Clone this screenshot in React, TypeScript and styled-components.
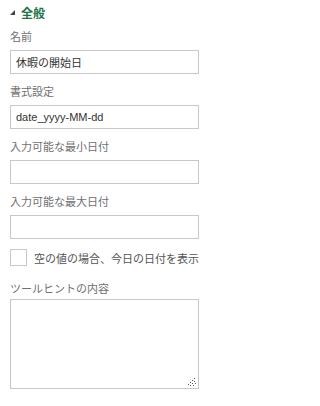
import styled, { createGlobalStyle } from 'styled-components'

const GlobalStyle = createGlobalStyle`
  html, body {
    margin: 0;
    padding: 0;
    background: #ffffff;
  }
  body {
    font-family: "Liberation Sans", "Noto Sans CJK JP", sans-serif;
  }
`

const Panel = styled.div`
  width: 207px;
  padding: 4px 8px 0 10px;
  box-sizing: border-box;
`

const SectionHeader = styled.div`
  display: flex;
  align-items: center;
  gap: 6px;
  height: 16px;
  margin-bottom: 9px;
  color: #217346;
  font-size: 12px;
  font-weight: bold;
`

const Caret = styled.svg`
  width: 5px;
  height: 5px;
  margin-top: 1px;
`

const Field = styled.div`
  display: flex;
  flex-direction: column;
  margin-bottom: 10px;
`

const Label = styled.label<{ $tight?: boolean }>`
  height: 16px;
  line-height: 16px;
  margin-bottom: ${p => (p.$tight ? 2 : 5)}px;
  color: #707070;
  font-size: 11px;
`

const TextBox = styled.input`
  height: 24px;
  width: 189px;
  box-sizing: border-box;
  margin: 0;
  padding: 0 5px;
  border: 1px solid #c8c8c8;
  border-radius: 0;
  outline: none;
  color: #333333;
  font-family: "Liberation Sans", "Noto Sans CJK JP", sans-serif;
  font-size: 11px;
`

const CheckRow = styled.label`
  display: flex;
  align-items: center;
  gap: 7px;
  margin: 7px 0 15px;
  color: #555555;
  font-size: 11px;
`

const Box = styled.span`
  width: 17px;
  height: 17px;
  box-sizing: border-box;
  border: 1px solid #c8c8c8;
  background: #ffffff;
`

const AreaWrap = styled.div`
  position: relative;
  width: 189px;
  height: 90px;
`

const TextArea = styled.textarea`
  display: block;
  width: 100%;
  height: 100%;
  box-sizing: border-box;
  margin: 0;
  padding: 4px 5px;
  border: 1px solid #c8c8c8;
  border-radius: 0;
  outline: none;
  resize: none;
  font-family: "Liberation Sans", "Noto Sans CJK JP", sans-serif;
  font-size: 11px;
`

const Grip = styled.svg`
  position: absolute;
  right: 3px;
  bottom: 3px;
  width: 9px;
  height: 9px;
  pointer-events: none;
`

const App = () => (
  <>
    <GlobalStyle />
    <Panel>
      <SectionHeader>
        <Caret viewBox="0 0 5 5">
          <polygon points="5,0 5,5 0,5" fill="#444" />
        </Caret>
        全般
      </SectionHeader>

      <Field>
        <Label>名前</Label>
        <TextBox defaultValue="休暇の開始日" />
      </Field>

      <Field>
        <Label>書式設定</Label>
        <TextBox defaultValue="date_yyyy-MM-dd" />
      </Field>

      <Field>
        <Label>入力可能な最小日付</Label>
        <TextBox />
      </Field>

      <Field>
        <Label>入力可能な最大日付</Label>
        <TextBox />
      </Field>

      <CheckRow>
        <Box />
        空の値の場合、今日の日付を表示
      </CheckRow>

      <Field>
        <Label $tight>ツールヒントの内容</Label>
        <AreaWrap>
          <TextArea />
          <Grip viewBox="0 0 9 9">
            <g fill="#555">
              <rect x="7" y="1" width="1" height="1" />
              <rect x="5" y="3" width="1" height="1" />
              <rect x="3" y="5" width="1" height="1" />
              <rect x="1" y="7" width="1" height="1" />
              <rect x="7" y="4" width="1" height="1" />
              <rect x="5" y="6" width="1" height="1" />
              <rect x="3" y="8" width="1" height="1" />
              <rect x="8" y="6" width="1" height="1" />
              <rect x="6" y="8" width="1" height="1" />
            </g>
          </Grip>
        </AreaWrap>
      </Field>
    </Panel>
  </>
)

export default App
